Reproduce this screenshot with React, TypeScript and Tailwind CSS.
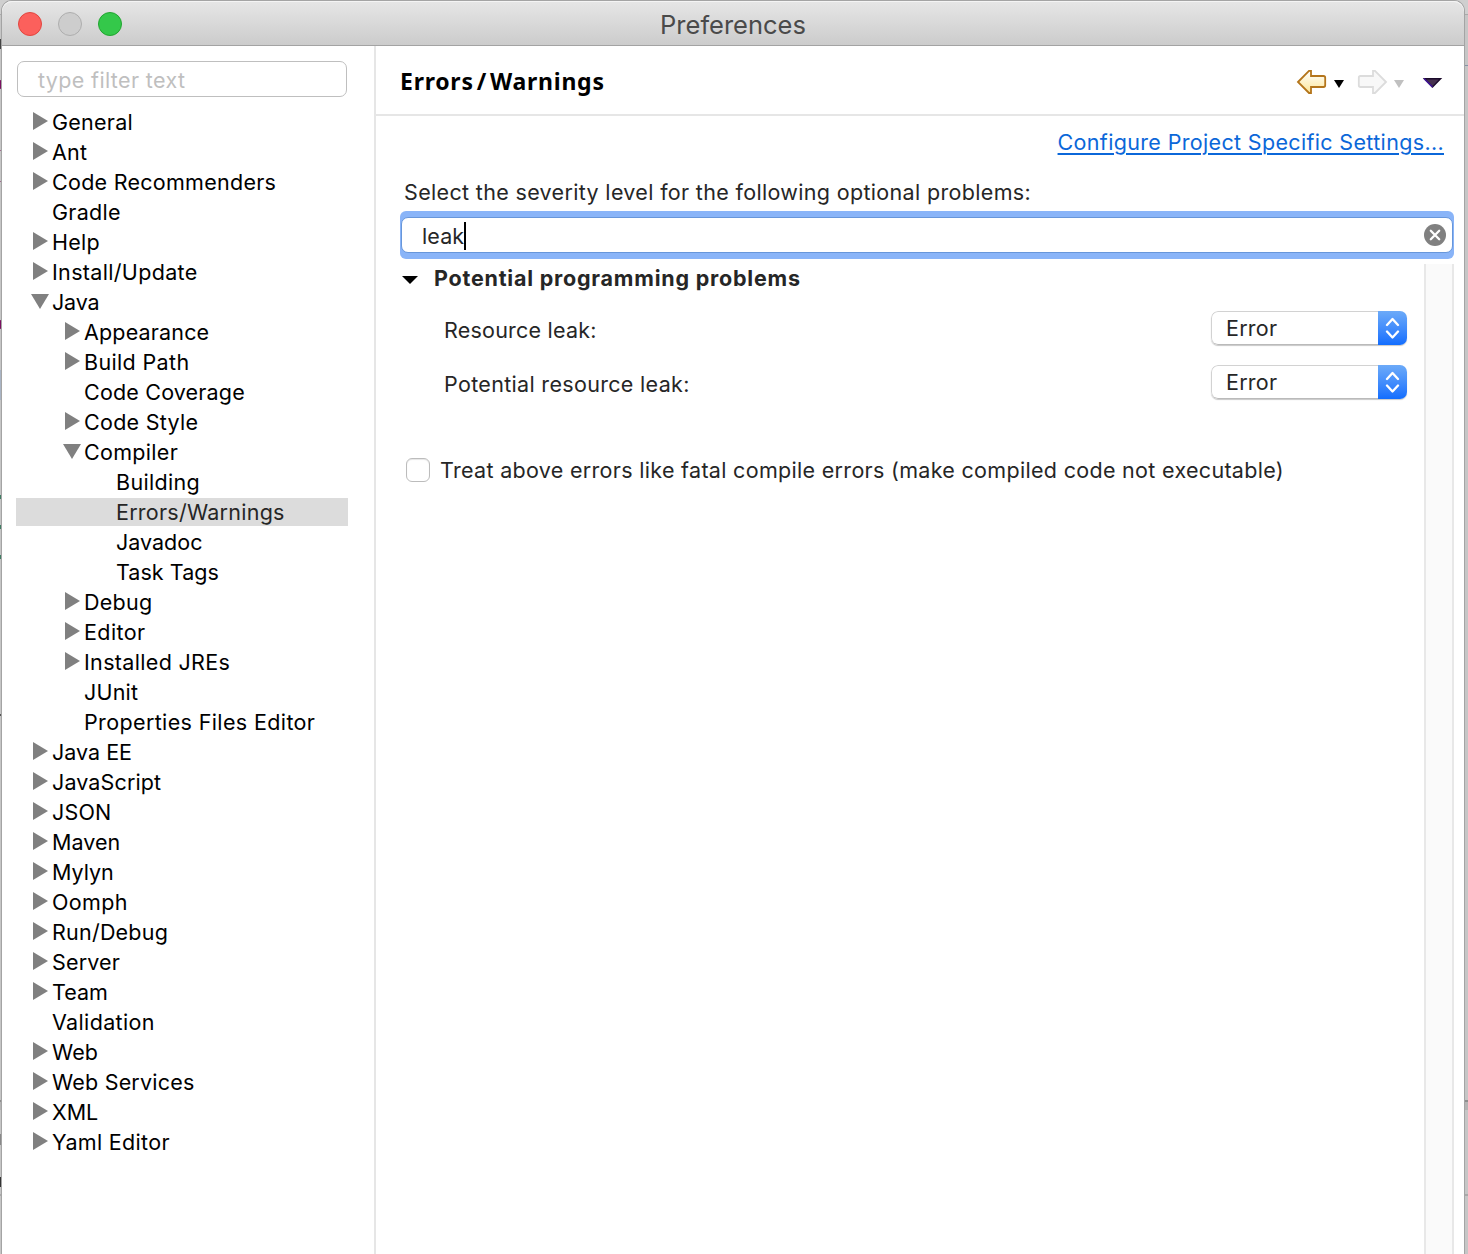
import React from "react";

type Item = { label: string; level: number; state?: "open" | "closed"; selected?: boolean; tracking: string };

const items: Item[] = [
  { label: "General", level: 0, state: "closed", tracking: "tracking-[0.25px]" },
  { label: "Ant", level: 0, state: "closed", tracking: "tracking-[0.2px]" },
  { label: "Code Recommenders", level: 0, state: "closed", tracking: "tracking-[0.27px]" },
  { label: "Gradle", level: 0, tracking: "tracking-[0.3px]" },
  { label: "Help", level: 0, state: "closed", tracking: "tracking-[0.25px]" },
  { label: "Install/Update", level: 0, state: "closed", tracking: "tracking-[0.33px]" },
  { label: "Java", level: 0, state: "open", tracking: "tracking-[-0.2px]" },
  { label: "Appearance", level: 1, state: "closed", tracking: "tracking-[0.16px]" },
  { label: "Build Path", level: 1, state: "closed", tracking: "tracking-[0.35px]" },
  { label: "Code Coverage", level: 1, tracking: "tracking-[0.18px]" },
  { label: "Code Style", level: 1, state: "closed", tracking: "tracking-[0.27px]" },
  { label: "Compiler", level: 1, state: "open", tracking: "tracking-[0.3px]" },
  { label: "Building", level: 2, tracking: "tracking-[0.33px]" },
  { label: "Errors/Warnings", level: 2, selected: true, tracking: "tracking-[0.25px]" },
  { label: "Javadoc", level: 2, tracking: "tracking-[0px]" },
  { label: "Task Tags", level: 2, tracking: "tracking-[0.05px]" },
  { label: "Debug", level: 1, state: "closed", tracking: "tracking-[0.25px]" },
  { label: "Editor", level: 1, state: "closed", tracking: "tracking-[0.4px]" },
  { label: "Installed JREs", level: 1, state: "closed", tracking: "tracking-[0.33px]" },
  { label: "JUnit", level: 1, tracking: "tracking-[0.2px]" },
  { label: "Properties Files Editor", level: 1, tracking: "tracking-[0.37px]" },
  { label: "Java EE", level: 0, state: "closed", tracking: "tracking-[0px]" },
  { label: "JavaScript", level: 0, state: "closed", tracking: "tracking-[0.12px]" },
  { label: "JSON", level: 0, state: "closed", tracking: "tracking-[0.2px]" },
  { label: "Maven", level: 0, state: "closed", tracking: "tracking-[0.05px]" },
  { label: "Mylyn", level: 0, state: "closed", tracking: "tracking-[0px]" },
  { label: "Oomph", level: 0, state: "closed", tracking: "tracking-[0.35px]" },
  { label: "Run/Debug", level: 0, state: "closed", tracking: "tracking-[0.22px]" },
  { label: "Server", level: 0, state: "closed", tracking: "tracking-[0.15px]" },
  { label: "Team", level: 0, state: "closed", tracking: "tracking-[0px]" },
  { label: "Validation", level: 0, tracking: "tracking-[0.35px]" },
  { label: "Web", level: 0, state: "closed", tracking: "tracking-[0.1px]" },
  { label: "Web Services", level: 0, state: "closed", tracking: "tracking-[0.2px]" },
  { label: "XML", level: 0, state: "closed", tracking: "tracking-[0px]" },
  { label: "Yaml Editor", level: 0, state: "closed", tracking: "tracking-[0.32px]" },
];

const indents = ["pl-[15px]", "pl-[47px]", "pl-[79px]"];

function Disclosure({ state }: { state?: "open" | "closed" }) {
  return (
    <svg width="18" height="20" viewBox="0 0 18 20" className="mr-[3px] shrink-0 fill-[#808080]">
      {state === "closed" && <path d="M2 1v18l15-9z" />}
      {state === "open" && <path d="M0 3h18L9 18z" />}
    </svg>
  );
}

function TreeRow({ item }: { item: Item }) {
  return (
    <li className="h-[30px] py-px">
      <div className={`flex h-[28px] ${indents[item.level]} ${item.selected ? "bg-[#dcdcdc] text-[#262626]" : "text-black"}`}>
        <span className="pt-[3px]"><Disclosure state={item.state} /></span>
        <span className={`whitespace-nowrap leading-[28px] ${item.tracking}`}>{item.label}</span>
      </div>
    </li>
  );
}

function Select({ value }: { value: string }) {
  return (
    <div className="flex h-[34px] w-[196px] overflow-hidden rounded-[7px] bg-white shadow-[0_1px_1px_rgba(0,0,0,0.22)]">
      <div className="flex-1 rounded-l-[7px] border border-r-0 border-[#d2d2d2] border-b-[#bababa] pl-[14px] leading-[32px] tracking-[0.25px] text-[#262626]">{value}</div>
      <div className="flex w-[29px] items-center justify-center bg-gradient-to-b from-[#6caaf8] to-[#116dfe]">
        <svg width="15" height="22" viewBox="0 0 15 22" fill="none" stroke="white" strokeWidth="2.3" strokeLinecap="round" strokeLinejoin="round">
          <path d="M2 8 7.5 2 13 8M2 14.500 7.500 20.500 13 14.500" />
        </svg>
      </div>
    </div>
  );
}

function SettingRow({ label, tracking }: { label: string; tracking: string }) {
  return (
    <div className="flex h-[34px] justify-between">
      <span className={`leading-[39px] ${tracking}`}>{label}</span>
      <Select value="Error" />
    </div>
  );
}

function BackWindow() {
  return (
    <>
      <div className="absolute inset-x-0 top-0 h-[15px] bg-[#cfcfcf]" />
      <div className="absolute left-0 top-[14px] h-px w-full bg-[#aaaaaa]" />
      <div className="absolute left-0 top-[39px] h-[10px] w-[2px] bg-[#444444]" />
      <div className="absolute left-0 top-[80px] h-[9px] w-[2px] rounded-r bg-[#7a1060]" />
      <div className="absolute left-0 top-[320px] h-[9px] w-[2px] rounded-r bg-[#7a1060]" />
      <div className="absolute left-0 top-[150px] h-px w-[2px] bg-[#a06d90]" />
      <div className="absolute left-0 top-[181px] h-px w-[2px] bg-[#a06d90]" />
      <div className="absolute left-0 top-[370px] h-[30px] w-[2px] bg-[#a9b4c4]" />
      <div className="absolute left-0 top-[495px] h-[4px] w-[2px] bg-[#3f7c62]" />
      <div className="absolute left-0 top-[525px] h-[4px] w-[2px] bg-[#3f7c62]" />
      <div className="absolute left-0 top-[555px] h-[4px] w-[2px] bg-[#3f7c62]" />
      <div className="absolute left-0 top-[714px] h-[2px] w-[2px] bg-[#555555]" />
      <div className="absolute left-0 top-[1134px] h-[11px] w-[2px] bg-[#888888]" />
      <div className="absolute left-0 top-[1177px] h-[10px] w-[2px] bg-[#333333]" />
      <div className="absolute right-0 top-[65px] h-px w-[4px] bg-[#8793a6]" />
      <div className="absolute left-0 top-[1100px] h-[2px] w-full bg-[#8e8e8e]" />
      <div className="absolute left-0 top-[1102px] h-[8px] w-full bg-[#b4b4b4]" />
      <div className="absolute left-0 top-[1194px] h-[2px] w-full bg-[#a9a9a9]" />
    </>
  );
}

export default function App() {
  return (
    <div className="relative h-[1254px] w-[1468px] overflow-hidden bg-[#c6c6c6] pl-[2px] pt-px font-['Inter',sans-serif] text-[21.5px]">
      <BackWindow />
      <div className="relative flex h-[1253px] w-[1462px] flex-col rounded-t-[10px] bg-white shadow-[0_0_0_1px_#a4a4a4]">
        <header className="relative h-[45px] shrink-0 rounded-t-[10px] border-b border-[#a3a3a3] bg-gradient-to-b from-[#e6e6e6] to-[#cccccc] shadow-[inset_0_1px_0_#f4f4f4]">
          <div className="absolute left-[16px] top-[11px] flex gap-4">
            <span className="size-6 rounded-full border border-[#e2463f] bg-[#fc605c]" />
            <span className="size-6 rounded-full border border-[#aeaeae] bg-[#cdcdcd]" />
            <span className="size-6 rounded-full border border-[#22a530] bg-[#34c84a]" />
          </div>
          <h1 className="text-center text-[25.5px] leading-[47px] text-[#4a4a4a]">Preferences</h1>
        </header>

        <div className="flex min-h-0 flex-1">
          <aside className="w-[374px] shrink-0 border-r-2 border-[#e6e6e6] pl-[14px] pr-[26px] pt-[15px]">
            <div className="ml-px h-[36px] w-[330px] rounded-[7px] border border-[#bfbfbf] pl-[20px] leading-[37px] tracking-[0.36px] text-[#bfbfbf]">type filter text</div>
            <ul className="mt-[10px]">
              {items.map((item) => <TreeRow key={item.label} item={item} />)}
            </ul>
          </aside>

          <main className="flex flex-1 flex-col text-[#262626]">
            <div className="flex h-[70px] shrink-0 items-start justify-between border-b-2 border-[#e6e6e6] pl-[24px] pr-[20px]">
              <h2 className="font-['Noto_Sans',sans-serif] text-[23px] font-bold leading-[70px] tracking-[0.75px] text-black">Errors<span className="px-[3px]">/</span>Warnings</h2>
              <svg width="148" height="26" viewBox="1296 69 148 26" className="mt-[23px]">
                <defs>
                  <linearGradient id="gold" x1="0" y1="0" x2="0" y2="1">
                    <stop offset="0" stopColor="#ffffff" />
                    <stop offset="1" stopColor="#fde698" />
                  </linearGradient>
                </defs>
                <path d="M1298 82 1309 70.800H1311V76H1323.500Q1325.200 76 1325.200 77.700V85.300Q1325.200 87 1323.500 87H1311V93H1309z" fill="url(#gold)" stroke="#b4751b" strokeWidth="1.8" />
                <path d="M1334 80h10l-5 8z" fill="#000" />
                <path d="M1386 82 1375 70.800H1373V76H1360.500Q1358.800 76 1358.800 77.700V85.300Q1358.800 87 1360.500 87H1373V93H1375z" fill="#f8f8f8" stroke="#dcdcdc" strokeWidth="1.8" />
                <path d="M1394 80h10l-5 8z" fill="#c0c0c0" />
                <path d="M1424.500 78.700h16l-8 8.300z" fill="#46304f" stroke="#1b0b2b" strokeWidth="1.500" />
                <path d="M1424 78.500 1432.500 87" stroke="#43149a" strokeWidth="1.500" />
              </svg>
            </div>

            <div className="flex h-[54px] shrink-0 justify-end pr-[20px]">
              <a className="leading-[52px] tracking-[0.34px] text-[#0b67d9] underline decoration-2 underline-offset-[3px]">Configure Project Specific Settings...</a>
            </div>
            <p className="h-[41px] shrink-0 pl-[28px] leading-[44px] tracking-[0.335px]">Select the severity level for the following optional problems:</p>

            <div className="ml-[24px] h-[48px] w-[1054px] shrink-0 rounded-[6px] bg-[#89b4f8] px-px pb-[6px] pt-[6px]">
              <div className="flex h-[36px] items-center rounded-[7px] border border-[#6796da] bg-white pl-[20px] pr-[6px]">
                <span className="pt-[2px] leading-[34px] tracking-[0.1px]">leak</span>
                <span className="mt-[2px] h-[28px] w-[2px] bg-black" />
                <svg width="22" height="22" viewBox="0 0 22 22" className="ml-auto">
                  <circle cx="11" cy="11" r="11" fill="#808080" />
                  <path d="m6.800 6.800 8.400 8.400m0-8.400-8.400 8.400" stroke="white" strokeWidth="2.300" strokeLinecap="round" />
                </svg>
              </div>
            </div>

            <div className="mt-[5px] flex min-h-0 w-[1078px] flex-1 justify-between">
              <section className="w-[1031px] pl-[26px]">
                <div className="flex h-[30px] items-center">
                  <svg width="16" height="8" viewBox="0 0 16 8" className="mt-px"><path d="M0 0h16L8 8z" /></svg>
                  <h3 className="ml-[16px] h-[30px] font-bold leading-[28px] tracking-[0.78px]">Potential programming problems</h3>
                </div>
                <div className="mt-[17px] flex flex-col gap-[20px] pl-[42px]">
                  <SettingRow label="Resource leak:" tracking="tracking-[0.22px]" />
                  <SettingRow label="Potential resource leak:" tracking="tracking-[0.32px]" />
                </div>
                <label className="mt-[56px] flex items-center gap-[10px] pl-[4px]">
                  <span className="size-6 rounded-[6px] border border-[#bcbcbc] bg-white shadow-[inset_0_1px_1px_rgba(0,0,0,0.1)]" />
                  <span className="leading-[30px] tracking-[0.31px]">Treat above errors like fatal compile errors (make compiled code not executable)</span>
                </label>
              </section>
              <div className="w-[30px] border-x-2 border-[#e8e8e8] bg-[#fafafa]" />
            </div>
          </main>
        </div>
      </div>
    </div>
  );
}
